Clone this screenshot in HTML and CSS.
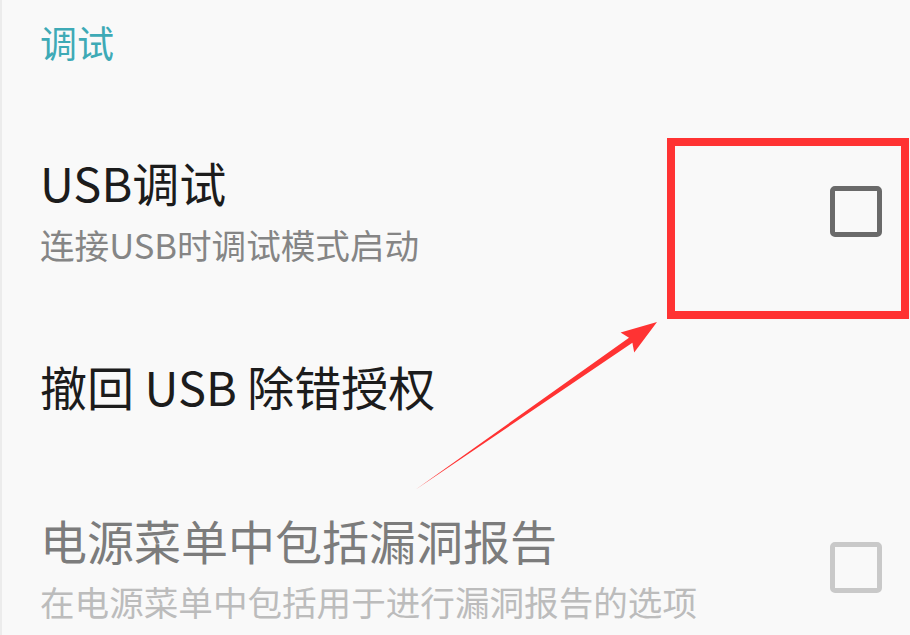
FILE: index.html
```html
<!DOCTYPE html>
<html lang="zh-CN">
<head>
<meta charset="utf-8">
<title>调试</title>
<link rel="stylesheet" href="styles.css">
</head>
<body>
<div class="screen">
  <div class="section-title">调试</div>

  <div class="row row-usb">
    <div class="text">
      <div class="title">USB调试</div>
      <div class="summary">连接USB时调试模式启动</div>
    </div>
    <div class="checkbox"></div>
  </div>

  <div class="row row-revoke">
    <div class="text">
      <div class="title">撤回 USB 除错授权</div>
    </div>
  </div>

  <div class="row row-bug disabled">
    <div class="text">
      <div class="title">电源菜单中包括漏洞报告</div>
      <div class="summary">在电源菜单中包括用于进行漏洞报告的选项</div>
    </div>
    <div class="checkbox"></div>
  </div>

  <div class="highlight"></div>
  <svg class="arrow" width="910" height="635" viewBox="0 0 910 635">
    <polygon points="415,490 629,337.7 620.6,332.6 657,322 634.2,352.4 632.4,342.7" fill="#ff3333"/>
  </svg>
</div>
</body>
</html>
```

FILE: styles.css
```css
html, body {
  margin: 0;
  padding: 0;
}
body {
  width: 910px;
  height: 635px;
  overflow: hidden;
  background: #f9f9f9;
  font-family: "Noto Sans CJK SC", "Noto Sans", sans-serif;
}
.screen {
  position: relative;
  box-sizing: border-box;
  width: 910px;
  height: 635px;
  padding: 24px 28px 0 38px;
  border-left: 2px solid #ececec;
}
.section-title {
  font-size: 37px;
  line-height: 37px;
  color: #3eaab6;
}
.row {
  display: flex;
  align-items: center;
  justify-content: space-between;
}
.row-usb {
  margin-top: 97px;
}
.row-revoke {
  margin-top: 100px;
}
.row-bug {
  margin-top: 107px;
}
.title {
  font-size: 47px;
  line-height: 47px;
  color: #1c1c1c;
}
.summary {
  margin-top: 22px;
  font-size: 34.6px;
  line-height: 35px;
  color: #858585;
}
.row-bug .title {
  color: #7c7c7c;
}
.row-bug .summary {
  margin-top: 21px;
  color: #bcbcbc;
}
.checkbox {
  box-sizing: border-box;
  width: 52px;
  height: 51px;
  border: 5px solid #6a6a6a;
  border-radius: 5px;
  margin-top: 2px;
}
.row-bug .checkbox {
  border-color: #c9c9c9;
  margin-top: 0;
}
.highlight {
  position: absolute;
  left: 665px;
  top: 138px;
  width: 242px;
  height: 181px;
  box-sizing: border-box;
  border: 8px solid #ff3333;
}
.arrow {
  position: absolute;
  left: -2px;
  top: 0;
}
```
